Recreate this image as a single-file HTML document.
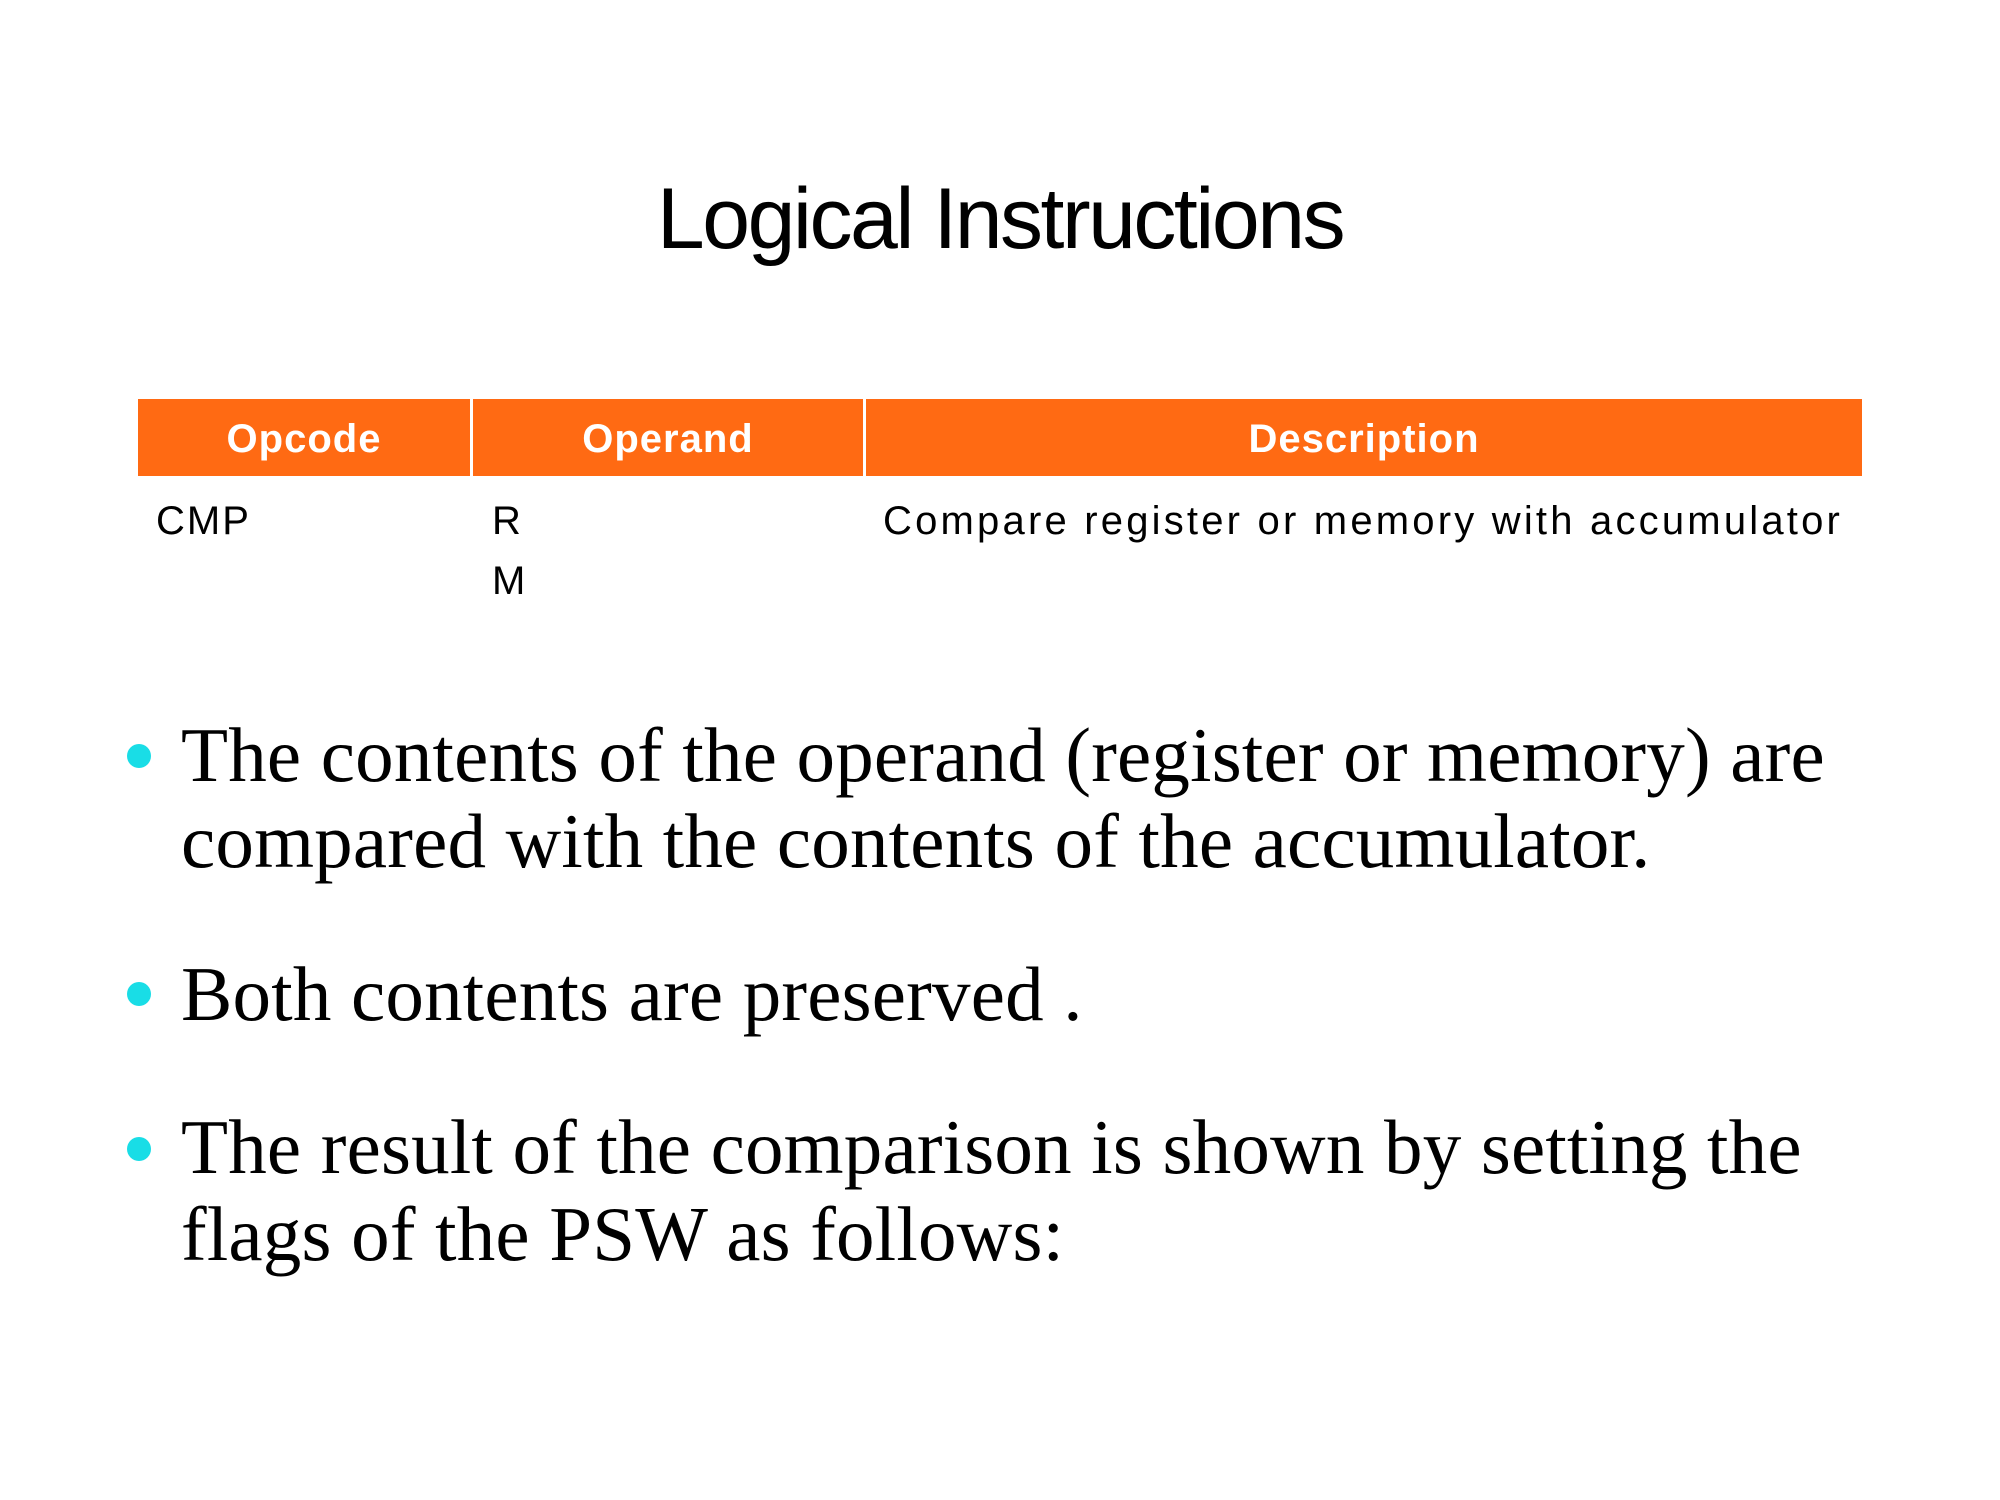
<!DOCTYPE html>
<html><head><meta charset="utf-8"><style>
html,body{margin:0;padding:0;background:#fff;}
body{width:2000px;height:1500px;position:relative;overflow:hidden;}
.a{position:absolute;white-space:nowrap;}
.title{font-family:"Liberation Sans",sans-serif;font-size:86px;color:#000;left:0;width:2000px;text-align:center;top:170px;letter-spacing:-2.5px;}
.hdr{position:absolute;top:399px;height:77px;background:#FF6A13;}
.ht{font-family:"Liberation Sans",sans-serif;font-weight:bold;color:#fff;font-size:40px;line-height:80px;text-align:center;letter-spacing:1px;}
.cell{font-family:"Liberation Sans",sans-serif;font-size:40px;color:#000;}
.ser{font-family:"Liberation Serif",serif;font-size:77px;color:#000;letter-spacing:0.2px;}
.dot{position:absolute;width:24px;height:24px;border-radius:50%;background:#19DDE6;}
</style></head><body>
<div class="a title">Logical Instructions</div>
<div class="hdr" style="left:138px;width:332px"><div class="ht">Opcode</div></div>
<div class="hdr" style="left:473px;width:390px"><div class="ht">Operand</div></div>
<div class="hdr" style="left:866px;width:996px"><div class="ht">Description</div></div>
<div class="a cell" style="left:156px;top:499px;letter-spacing:2px">CMP</div>
<div class="a cell" style="left:492px;top:499px">R</div>
<div class="a cell" style="left:492px;top:559px">M</div>
<div class="a cell" style="left:883px;top:499px;letter-spacing:3.2px">Compare register or memory with accumulator</div>
<div class="dot" style="left:127px;top:744px"></div>
<div class="a ser" style="left:181px;top:711px">The contents of the operand (register or memory) are</div>
<div class="a ser" style="left:181px;top:797px">compared with the contents of the accumulator.</div>
<div class="dot" style="left:127px;top:982px"></div>
<div class="a ser" style="left:181px;top:950px">Both contents are preserved .</div>
<div class="dot" style="left:127px;top:1137px"></div>
<div class="a ser" style="left:181px;top:1103px">The result of the comparison is shown by setting the</div>
<div class="a ser" style="left:181px;top:1190px">flags of the PSW as follows:</div>
</body></html>
